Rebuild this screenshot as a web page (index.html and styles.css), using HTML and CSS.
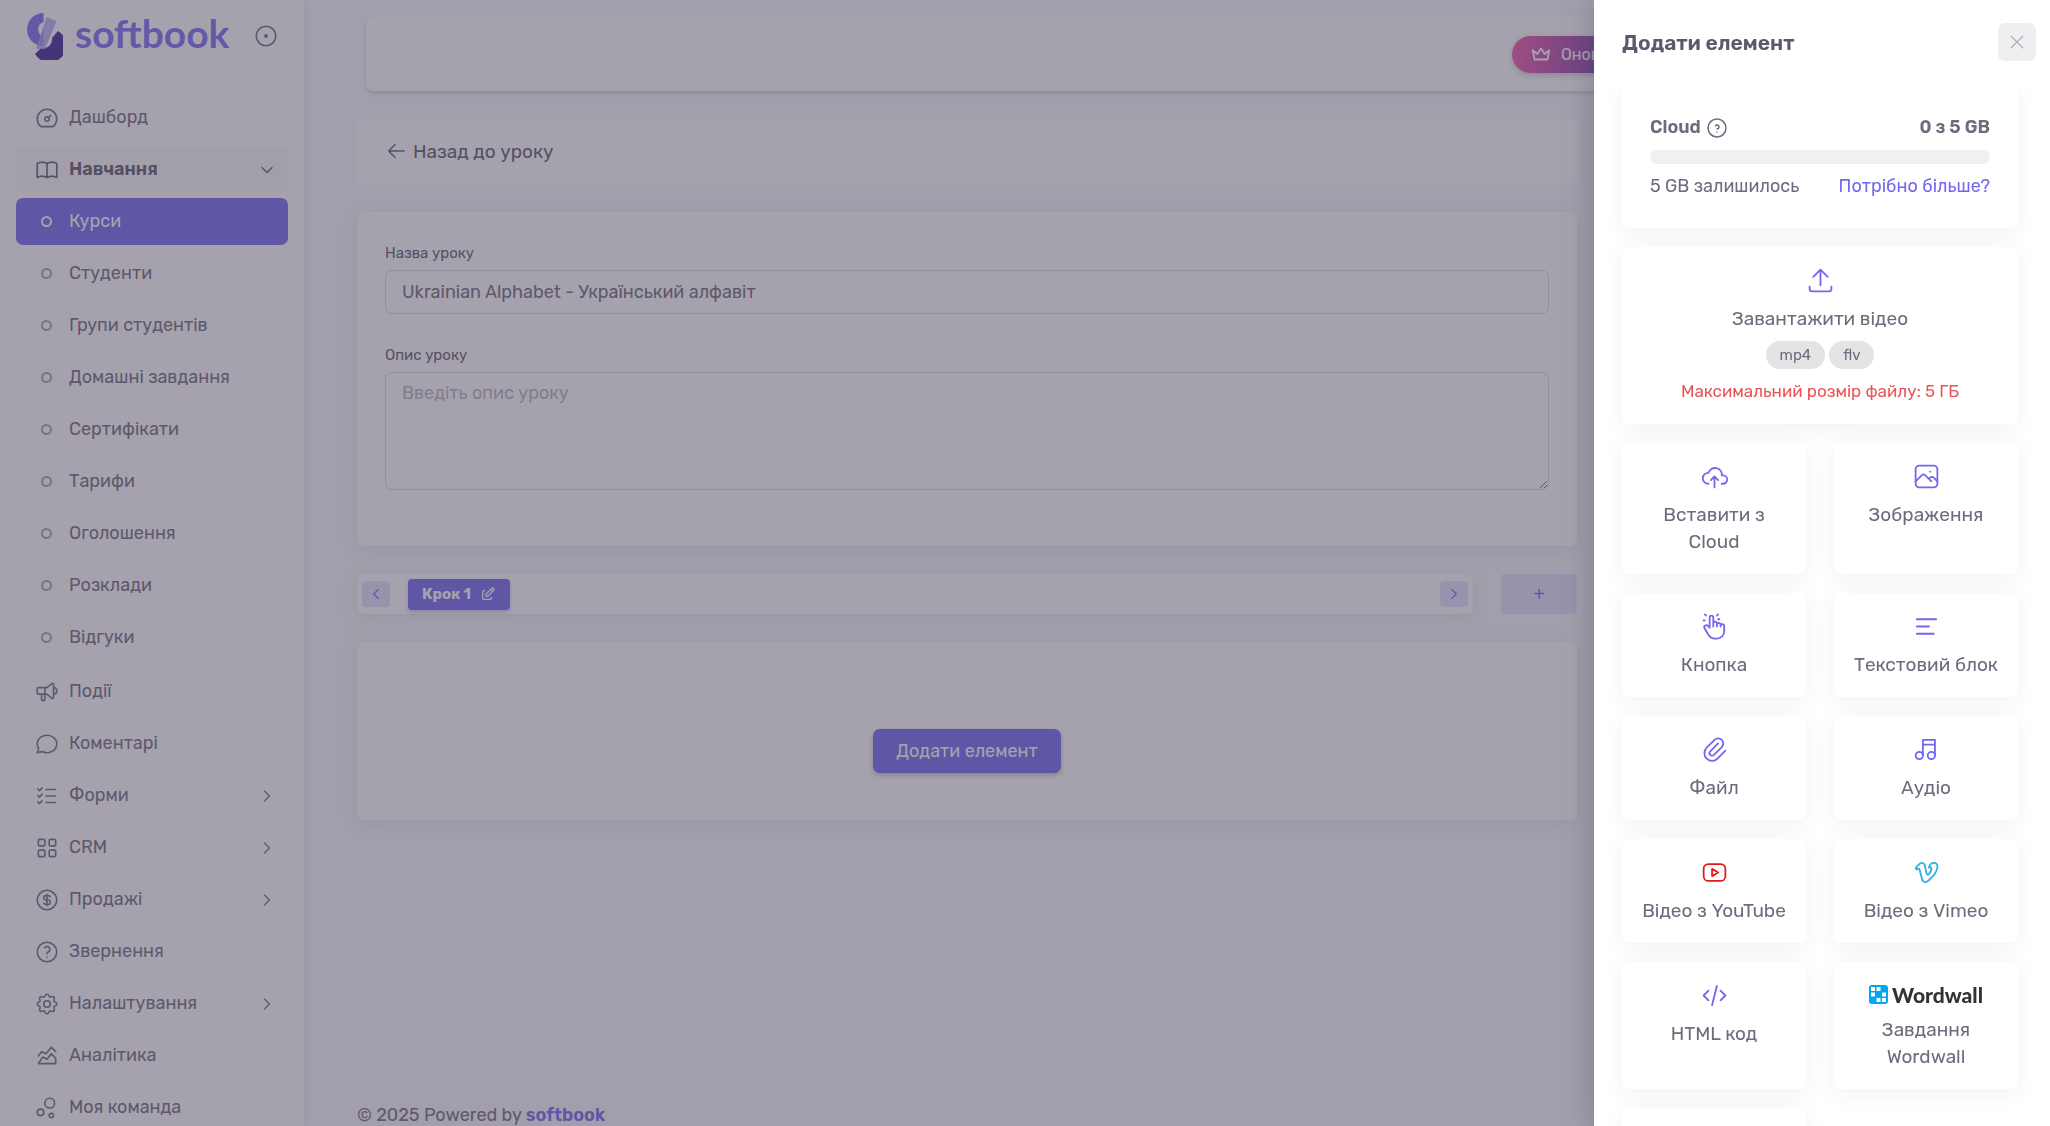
FILE: index.html
```html
<!DOCTYPE html>
<html lang="uk">
<head>
    <meta charset="UTF-8">
    <meta name="viewport" content="width=device-width, initial-scale=1.0">
    <title>softbook - Редагування уроку</title>
    <link rel="stylesheet" href="styles.css">
</head>
<body>
    <div class="layout">
        <aside class="sidebar">
            <div class="brand">
                <a href="#" class="brand-link">
                    <svg class="brand-logo" viewBox="0 0 36 47">
                        <path d="M16.500 0 A16.500 16.500 0 0 0 16.500 33 V24 A8 8 0 0 1 16.500 9 Z" fill="#7c6cf0"/>
                        <path d="M31 18 A16.800 16.800 0 1 1 8 41 L14 35 A9 9 0 0 0 25 25 Z" fill="#3d2494"/>
                        <path d="M16.500 14 V33 L11 33 Z" fill="#7c6cf0"/>
                        <path d="M19.500 4 L29.500 8 L18 36 L9 36 Z" fill="#ab9cf5" opacity="0.8"/>
                    </svg>
                    <span class="brand-text">softbook</span>
                </a>
                <button class="pin-btn" aria-label="Закріпити меню">
                    <svg class="icon" viewBox="0 0 24 24"><circle cx="12" cy="12" r="9"/><circle cx="12" cy="12" r="1" fill="currentColor"/></svg>
                </button>
            </div>

            <nav class="menu">
                <a href="#" class="menu-item">
                    <svg class="icon" viewBox="0 0 24 24"><circle cx="12" cy="13" r="2"/><path d="M13.450 11.550l2.050 -2.050M6.400 20a9 9 0 1 1 11.200 0z"/></svg>
                    <span>Дашборд</span>
                </a>
                <a href="#" class="menu-item open">
                    <svg class="icon" viewBox="0 0 24 24"><path d="M3 19a9 9 0 0 1 9 0a9 9 0 0 1 9 0M3 6a9 9 0 0 1 9 0a9 9 0 0 1 9 0M3 6v13M12 6v13M21 6v13"/></svg>
                    <span>Навчання</span>
                    <svg class="icon arrow" viewBox="0 0 24 24"><path d="M6 9l6 6l6 -6"/></svg>
                </a>
                <div class="submenu">
                    <a href="#" class="menu-item active"><i class="ring"></i><span>Курси</span></a>
                    <a href="#" class="menu-item"><i class="ring"></i><span>Студенти</span></a>
                    <a href="#" class="menu-item"><i class="ring"></i><span>Групи студентів</span></a>
                    <a href="#" class="menu-item"><i class="ring"></i><span>Домашні завдання</span></a>
                    <a href="#" class="menu-item"><i class="ring"></i><span>Сертифікати</span></a>
                    <a href="#" class="menu-item"><i class="ring"></i><span>Тарифи</span></a>
                    <a href="#" class="menu-item"><i class="ring"></i><span>Оголошення</span></a>
                    <a href="#" class="menu-item"><i class="ring"></i><span>Розклади</span></a>
                    <a href="#" class="menu-item"><i class="ring"></i><span>Відгуки</span></a>
                </div>
                <a href="#" class="menu-item">
                    <svg class="icon" viewBox="0 0 24 24"><path d="M18 8a3 3 0 0 1 0 6M10 8v11a1 1 0 0 1 -1 1h-1a1 1 0 0 1 -1 -1v-5M12 8l4.524 -3.770a.9 .9 0 0 1 1.476 .692v12.156a.9 .9 0 0 1 -1.476 .692l-4.524 -3.770h-8a1 1 0 0 1 -1 -1v-4a1 1 0 0 1 1 -1h8"/></svg>
                    <span>Події</span>
                </a>
                <a href="#" class="menu-item">
                    <svg class="icon" viewBox="0 0 24 24"><path d="M3 20l1.300 -3.900a9 8 0 1 1 3.400 2.900l-4.700 1"/></svg>
                    <span>Коментарі</span>
                </a>
                <a href="#" class="menu-item">
                    <svg class="icon" viewBox="0 0 24 24"><path d="M3.500 5.500l1.500 1.500l2.500 -2.500M3.500 11.500l1.500 1.500l2.500 -2.500M3.500 17.500l1.500 1.500l2.500 -2.500M11 6h9M11 12h9M11 18h9"/></svg>
                    <span>Форми</span>
                    <svg class="icon arrow" viewBox="0 0 24 24"><path d="M9 6l6 6l-6 6"/></svg>
                </a>
                <a href="#" class="menu-item">
                    <svg class="icon" viewBox="0 0 24 24"><rect x="4" y="4" width="6" height="6" rx="1"/><rect x="14" y="4" width="6" height="6" rx="1"/><rect x="4" y="14" width="6" height="6" rx="1"/><rect x="14" y="14" width="6" height="6" rx="1"/></svg>
                    <span>CRM</span>
                    <svg class="icon arrow" viewBox="0 0 24 24"><path d="M9 6l6 6l-6 6"/></svg>
                </a>
                <a href="#" class="menu-item">
                    <svg class="icon" viewBox="0 0 24 24"><circle cx="12" cy="12" r="9"/><path d="M14.800 9a2 2 0 0 0 -1.800 -1h-2a2 2 0 1 0 0 4h2a2 2 0 1 1 0 4h-2a2 2 0 0 1 -1.800 -1M12 7v10"/></svg>
                    <span>Продажі</span>
                    <svg class="icon arrow" viewBox="0 0 24 24"><path d="M9 6l6 6l-6 6"/></svg>
                </a>
                <a href="#" class="menu-item">
                    <svg class="icon" viewBox="0 0 24 24"><circle cx="12" cy="12" r="9"/><path d="M12 17v.01M12 13.500a1.500 1.500 0 0 1 1 -1.500a2.600 2.600 0 1 0 -3 -4"/></svg>
                    <span>Звернення</span>
                </a>
                <a href="#" class="menu-item">
                    <svg class="icon" viewBox="0 0 24 24"><path d="M10.325 4.317c.426 -1.756 2.924 -1.756 3.350 0a1.724 1.724 0 0 0 2.573 1.066c1.543 -.94 3.310 .826 2.370 2.370a1.724 1.724 0 0 0 1.065 2.572c1.756 .426 1.756 2.924 0 3.350a1.724 1.724 0 0 0 -1.066 2.573c.94 1.543 -.826 3.310 -2.370 2.370a1.724 1.724 0 0 0 -2.572 1.065c-.426 1.756 -2.924 1.756 -3.350 0a1.724 1.724 0 0 0 -2.573 -1.066c-1.543 .94 -3.310 -.826 -2.370 -2.370a1.724 1.724 0 0 0 -1.065 -2.572c-1.756 -.426 -1.756 -2.924 0 -3.350a1.724 1.724 0 0 0 1.066 -2.573c-.94 -1.543 .826 -3.310 2.370 -2.370c1 .608 2.296 .07 2.572 -1.065z"/><circle cx="12" cy="12" r="3"/></svg>
                    <span>Налаштування</span>
                    <svg class="icon arrow" viewBox="0 0 24 24"><path d="M9 6l6 6l-6 6"/></svg>
                </a>
                <a href="#" class="menu-item">
                    <svg class="icon" viewBox="0 0 24 24"><path d="M4 19l4 -6l4 2l4 -5l4 4v5zM4 12l3 -4l4 2l5 -6l4 4"/></svg>
                    <span>Аналітика</span>
                </a>
                <a href="#" class="menu-item">
                    <svg class="icon" viewBox="0 0 24 24"><circle cx="6" cy="16" r="3"/><circle cx="16" cy="19" r="2"/><circle cx="14.500" cy="7.500" r="4.500"/></svg>
                    <span>Моя команда</span>
                </a>
            </nav>
        </aside>

        <div class="page">
            <header class="navbar">
                <button class="upgrade-btn">
                    <svg class="icon" viewBox="0 0 24 24"><path d="M12 6l4 6l5 -4l-2 10h-14l-2 -10l5 4z"/></svg>
                    <span>Оновити</span>
                </button>
            </header>

            <div class="content">
                <main class="editor">
                    <div class="back-bar">
                        <a href="#" class="back-link">
                            <svg class="icon" viewBox="0 0 24 24"><path d="M4 12h17M4 12l7 7M4 12l7 -7"/></svg>
                            Назад до уроку
                        </a>
                    </div>

                    <form class="card lesson-form">
                        <label for="lessonName">Назва уроку</label>
                        <input type="text" id="lessonName" value="Ukrainian Alphabet - Український алфавіт">
                        <label for="lessonText">Опис уроку</label>
                        <textarea id="lessonText" placeholder="Введіть опис уроку"></textarea>
                    </form>

                    <div class="steps">
                        <div class="steps-bar">
                            <button class="step-nav" aria-label="Попередній крок">
                                <svg class="icon" viewBox="0 0 24 24"><path d="M15 6l-6 6l6 6"/></svg>
                            </button>
                            <button class="step-btn">
                                Крок 1
                                <svg class="icon" viewBox="0 0 24 24"><path d="M7 7h-1a2 2 0 0 0 -2 2v9a2 2 0 0 0 2 2h9a2 2 0 0 0 2 -2v-1M20.385 6.585a2.100 2.100 0 0 0 -2.970 -2.970l-8.415 8.385v3h3l8.385 -8.415zM16 5l3 3"/></svg>
                            </button>
                            <button class="step-nav next" aria-label="Наступний крок">
                                <svg class="icon" viewBox="0 0 24 24"><path d="M9 6l6 6l-6 6"/></svg>
                            </button>
                        </div>
                        <button class="step-add">+</button>
                    </div>

                    <div class="card step-content">
                        <button class="btn-primary">Додати елемент</button>
                    </div>
                </main>
            </div>

            <footer class="footer">© 2025 Powered by <a href="#">softbook</a></footer>
        </div>
    </div>

    <div class="backdrop"></div>

    <aside class="drawer">
        <div class="drawer-header">
            <h2>Додати елемент</h2>
            <button class="close-btn" aria-label="Закрити">
                <svg class="icon" viewBox="0 0 24 24"><path d="M5 5l14 14M19 5l-14 14"/></svg>
            </button>
        </div>

        <div class="drawer-body">
            <section class="tile storage">
                <div class="storage-row total">
                    <span class="storage-title">Cloud
                        <svg class="icon" viewBox="0 0 24 24"><circle cx="12" cy="12" r="9"/><path d="M12 16v.01M12 13a2 2 0 0 0 .9 -3.800a1.980 1.980 0 0 0 -2.400 .5"/></svg>
                    </span>
                    <span>0 з 5 GB</span>
                </div>
                <div class="storage-bar"></div>
                <div class="storage-row">
                    <span>5 GB залишилось</span>
                    <a href="#">Потрібно більше?</a>
                </div>
            </section>

            <button class="tile wide">
                <svg class="icon" viewBox="0 0 24 24"><path d="M3 17v2a2 2 0 0 0 2 2h14a2 2 0 0 0 2 -2v-2M6 9l6 -6l6 6M12 3v13"/></svg>
                <span class="tile-name">Завантажити відео</span>
                <span class="badges"><span class="badge">mp4</span><span class="badge">flv</span></span>
                <span class="limit">Максимальний розмір файлу: 5 ГБ</span>
            </button>

            <button class="tile">
                <svg class="icon" viewBox="0 0 24 24"><path d="M7 18a4.600 4.400 0 0 1 0 -9a5 4.500 0 0 1 11 2h1a3.500 3.500 0 0 1 0 7h-1M9 15l3 -3l3 3M12 12v9"/></svg>
                <span class="tile-name">Вставити з Cloud</span>
            </button>
            <button class="tile">
                <svg class="icon" viewBox="0 0 24 24"><rect x="3" y="3" width="18" height="18" rx="3"/><path d="M15 8h.01M3 16l5 -5c.928 -.893 2.072 -.893 3 0l5 5M14 14l1 -1c.928 -.893 2.072 -.893 3 0l3 3"/></svg>
                <span class="tile-name">Зображення</span>
            </button>
            <button class="tile">
                <svg class="icon" viewBox="0 0 24 24"><path d="M8 13v-8.500a1.500 1.500 0 0 1 3 0v7.500M11 11.500v-2a1.500 1.500 0 0 1 3 0v2.500M14 10.500a1.500 1.500 0 0 1 3 0v1.500M17 11.500a1.500 1.500 0 0 1 3 0v4.500a6 6 0 0 1 -6 6h-2h.208a6 6 0 0 1 -5.012 -2.700l-.196 -.3c-.312 -.479 -1.407 -2.388 -3.286 -5.728a1.500 1.500 0 0 1 .536 -2.022a1.867 1.867 0 0 1 2.280 .28l1.470 1.470M5 3l-1 -1M4 7h-1M14 3l1 -1M15 6h1"/></svg>
                <span class="tile-name">Кнопка</span>
            </button>
            <button class="tile">
                <svg class="icon" viewBox="0 0 24 24"><path d="M4 6h16M4 12h10M4 18h14"/></svg>
                <span class="tile-name">Текстовий блок</span>
            </button>
            <button class="tile">
                <svg class="icon" viewBox="0 0 24 24"><path d="M15 7l-6.500 6.500a1.500 1.500 0 0 0 3 3l6.500 -6.500a3 3 0 0 0 -6 -6l-6.500 6.500a4.500 4.500 0 0 0 9 9l6.500 -6.500"/></svg>
                <span class="tile-name">Файл</span>
            </button>
            <button class="tile">
                <svg class="icon" viewBox="0 0 24 24"><circle cx="6" cy="17" r="3"/><circle cx="16" cy="17" r="3"/><path d="M9 17v-13h10v13M9 8h10"/></svg>
                <span class="tile-name">Аудіо</span>
            </button>
            <button class="tile">
                <svg class="icon youtube" viewBox="0 0 24 24"><rect x="3" y="5" width="18" height="14" rx="4"/><path d="M10 9l5 3l-5 3z"/></svg>
                <span class="tile-name">Відео з YouTube</span>
            </button>
            <button class="tile">
                <svg class="icon vimeo" viewBox="0 0 24 24"><path d="M3 8.500l1 1s1.500 -1.102 2 -.5c.509 .609 1.863 7.650 2.500 9c.556 1.184 1.978 2.890 4 1.500c2 -1.500 7.500 -5.500 8.500 -11.500c.444 -2.661 -1 -4 -2.500 -4c-2 0 -4.047 1.202 -4.500 4c2.050 -1.254 2.551 1 1.500 3c-1.052 2.005 -2 3 -2.500 3c-.49 0 -.924 -1.165 -1.500 -3.500c-.59 -2.420 -.5 -6.500 -3 -6.500s-5.500 4.500 -5.500 4.500z"/></svg>
                <span class="tile-name">Відео з Vimeo</span>
            </button>
            <button class="tile">
                <svg class="icon" viewBox="0 0 24 24"><path d="M7 8l-4 4l4 4M17 8l4 4l-4 4M14 4l-4 16"/></svg>
                <span class="tile-name">HTML код</span>
            </button>
            <button class="tile">
                <span class="wordwall">
                    <svg viewBox="0 0 19 19">
                        <rect width="19" height="19" rx="3" fill="#00a8f3"/>
                        <path d="M2 2h4v4h-4zM7.500 2h4v4h-4zM2 7.500h4v4h-4zM13 7.500h4v4h-4zM7.500 13h4v4h-4zM13 13h4v4h-4z" fill="#fff"/>
                    </svg>
                    Wordwall
                </span>
                <span class="tile-name">Завдання Wordwall</span>
            </button>
            <button class="tile">
                <svg class="icon" viewBox="0 0 24 24"><rect x="4" y="4" width="16" height="16" rx="2"/></svg>
            </button>
        </div>
    </aside>
</body>
</html>
```
FILE: styles.css
```css
* {
    margin: 0;
    padding: 0;
    box-sizing: border-box;
}

:root {
    --primary: #7367f0;
    --primary-soft: #e3e1fc;
    --text: #6f6b7d;
    --heading: #5d596c;
    --border: #dbdade;
    --bg: #f8f7fa;
    --shadow: 0 4px 18px rgba(75, 70, 92, 0.1);
}

body {
    height: 100vh;
    overflow: hidden;
    font-family: Rubik, Roboto, sans-serif;
    font-size: 18px;
    line-height: 27px;
    color: var(--text);
    background-color: var(--bg);
}

button,
input,
textarea {
    font: inherit;
    color: inherit;
}

button {
    border: none;
    background: none;
    cursor: pointer;
}

a {
    color: var(--primary);
    text-decoration: none;
}

.icon {
    flex: none;
    width: 26px;
    height: 26px;
    fill: none;
    stroke: currentColor;
    stroke-width: 1.5;
    stroke-linecap: round;
    stroke-linejoin: round;
}

.layout {
    display: flex;
    height: 100vh;
}

/* Sidebar */
.sidebar {
    flex: none;
    width: 304px;
    overflow: hidden;
    background-color: white;
    box-shadow: 0 2px 9px rgba(75, 70, 92, 0.1);
}

.brand {
    display: flex;
    align-items: center;
    justify-content: space-between;
    height: 72px;
    padding: 0 25px 0 27px;
}

.brand-link {
    display: flex;
    align-items: center;
    gap: 12px;
}

.brand-logo {
    width: 36px;
    height: 47px;
}

.brand-text {
    padding-bottom: 6px;
    font-family: Lato, sans-serif;
    font-size: 39px;
    font-weight: bold;
    line-height: 40px;
    color: #7c6cf0;
}

.pin-btn {
    display: flex;
}

.menu {
    display: flex;
    flex-direction: column;
    gap: 5px;
    padding: 22px 16px;
}

.submenu {
    display: flex;
    flex-direction: column;
    gap: 5px;
    margin-bottom: 2px;
}

.menu-item {
    display: flex;
    flex: none;
    align-items: center;
    gap: 9px;
    height: 47px;
    padding: 0 11px 0 18px;
    border-radius: 7px;
    color: var(--text);
}

.menu-item.open {
    font-weight: 600;
    color: var(--heading);
    background-color: #f8f8f8;
}

.menu-item.active {
    color: white;
    background-color: var(--primary);
}

.menu-item .arrow {
    width: 20px;
    height: 20px;
    margin-left: auto;
}

.ring {
    width: 11px;
    height: 11px;
    margin: 0 8px 0 7px;
    border: 2px solid #a5a2ad;
    border-radius: 50%;
}

.active .ring {
    border-color: white;
}

/* Page */
.page {
    display: flex;
    flex: 1;
    flex-direction: column;
    padding: 17px 57px 0 53px;
}

.navbar {
    display: flex;
    flex: none;
    align-items: center;
    justify-content: flex-end;
    height: 74px;
    margin-left: 9px;
    padding-right: 300px;
    border-radius: 7px;
    background-color: white;
    box-shadow: 0 3px 5px -1px rgba(75, 70, 92, 0.25);
}

.upgrade-btn {
    display: flex;
    align-items: center;
    gap: 9px;
    width: 181px;
    height: 37px;
    padding: 0 18px;
    border-radius: 19px;
    font-size: 16px;
    color: white;
    background: linear-gradient(100deg, #f556a8, #733bae 55%);
    box-shadow: 0 2px 6px rgba(75, 70, 92, 0.3);
}

.upgrade-btn .icon {
    width: 22px;
    height: 22px;
    stroke-width: 2;
}

.content {
    display: grid;
    grid-template-columns: 3fr 1fr;
    margin-right: -28px;
    padding-top: 28px;
}

.editor {
    min-width: 0;
    padding-right: 28px;
}

.card {
    border-radius: 7px;
    background-color: white;
    box-shadow: var(--shadow);
}

.back-bar {
    display: flex;
    align-items: center;
    height: 64px;
    margin-bottom: 29px;
    padding: 0 28px;
    background-color: white;
}

.back-link {
    display: flex;
    align-items: center;
    gap: 6px;
    font-size: 19px;
    color: var(--heading);
}

.back-link .icon {
    width: 22px;
    height: 22px;
}

.lesson-form {
    margin-bottom: 28px;
    padding: 28px;
    height: 334px;
}

.lesson-form label {
    display: block;
    margin-bottom: 3px;
    font-size: 15px;
    color: var(--heading);
}

.lesson-form input,
.lesson-form textarea {
    display: block;
    width: 100%;
    padding: 7px 16px;
    border: 1px solid var(--border);
    border-radius: 7px;
    background: none;
}

.lesson-form input {
    height: 44px;
    margin-bottom: 28px;
}

.lesson-form textarea {
    height: 118px;
    resize: vertical;
}

.lesson-form textarea::placeholder {
    color: #b7b5be;
}

.steps {
    display: flex;
    gap: 28px;
    margin-bottom: 28px;
}

.steps-bar {
    display: flex;
    flex: 1;
    align-items: center;
    height: 40px;
    padding: 0 5px;
    border-radius: 7px;
    background-color: white;
    box-shadow: var(--shadow);
}

.step-nav {
    display: flex;
    align-items: center;
    justify-content: center;
    width: 28px;
    height: 26px;
    border-radius: 4px;
    color: var(--primary);
    background-color: var(--primary-soft);
}

.step-nav.next {
    margin-left: auto;
}

.step-nav .icon {
    width: 18px;
    height: 18px;
}

.step-btn {
    display: flex;
    align-items: center;
    gap: 9px;
    height: 31px;
    margin-left: 18px;
    padding: 0 14px;
    border-radius: 4px;
    font-size: 15px;
    font-weight: bold;
    color: white;
    background-color: var(--primary);
    box-shadow: 0 2px 4px rgba(115, 103, 240, 0.4);
}

.step-btn .icon {
    width: 16px;
    height: 16px;
    stroke-width: 2;
}

.step-add {
    width: 76px;
    border-radius: 4px;
    color: var(--primary);
    background-color: var(--primary-soft);
}

.step-content {
    display: flex;
    align-items: center;
    justify-content: center;
    height: 178px;
    padding-top: 40px;
}

.btn-primary {
    height: 44px;
    padding: 0 23px;
    border-radius: 7px;
    color: white;
    background-color: var(--primary);
    box-shadow: 0 2px 5px rgba(75, 70, 92, 0.4);
}

.footer {
    margin-top: auto;
    margin-bottom: -3px;
}

.footer a {
    font-weight: 600;
}

/* Drawer */
.backdrop {
    position: fixed;
    inset: 0;
    background-color: rgba(75, 70, 92, 0.5);
}

.drawer {
    position: fixed;
    top: 0;
    right: 0;
    bottom: 0;
    display: flex;
    flex-direction: column;
    width: 456px;
    background-color: white;
    box-shadow: 0 4px 28px rgba(75, 70, 92, 0.4);
}

.drawer-header {
    display: flex;
    flex: none;
    align-items: center;
    justify-content: space-between;
    height: 86px;
    padding: 0 14px 2px 28px;
}

.drawer-header h2 {
    font-size: 21px;
    font-weight: 600;
    color: var(--heading);
}

.close-btn {
    display: flex;
    align-items: center;
    justify-content: center;
    width: 38px;
    height: 38px;
    border-radius: 7px;
    color: #a8a6ae;
    background-color: #efeff1;
}

.close-btn .icon {
    width: 20px;
    height: 20px;
}

.drawer-body {
    display: grid;
    flex: 1;
    grid-template-columns: 1fr 1fr;
    gap: 19px 28px;
    align-content: start;
    min-height: 0;
    padding: 0 32px 28px 28px;
    overflow: hidden;
}

.tile {
    display: flex;
    flex-direction: column;
    align-items: center;
    padding: 19px;
    border-radius: 7px;
    background-color: white;
    box-shadow: 0 4px 24px rgba(0, 0, 0, 0.06);
}

.tile > .icon {
    width: 29px;
    height: 29px;
    margin-bottom: 10px;
    color: var(--primary);
}

.tile > .youtube {
    color: #e01b1b;
}

.tile > .vimeo {
    color: #2fb0e0;
}

.tile-name {
    font-size: 19px;
}

.tile.wide,
.tile.storage {
    grid-column: 1 / -1;
}

.tile.storage {
    align-items: stretch;
    height: 142px;
    padding: 28px;
}

.storage-row {
    display: flex;
    justify-content: space-between;
}

.storage-row.total {
    font-weight: 600;
}

.storage-title {
    display: flex;
    align-items: center;
    gap: 4px;
}

.storage-title .icon {
    width: 24px;
    height: 24px;
}

.storage-bar {
    height: 14px;
    margin: 9px 0;
    border-radius: 7px;
    background-color: #f0f0f2;
}

.badges {
    display: flex;
    gap: 4px;
    margin: 9px 0;
}

.badge {
    padding: 0 14px;
    border-radius: 14px;
    font-size: 15px;
    line-height: 28px;
    background-color: #e4e4e4;
}

.limit {
    font-size: 17px;
    color: #ea5455;
}

.wordwall {
    display: flex;
    align-items: center;
    gap: 4px;
    height: 26px;
    margin-bottom: 9px;
    font-family: Lato, sans-serif;
    font-size: 21px;
    font-weight: 900;
    color: #333;
}

.wordwall svg {
    width: 19px;
    height: 19px;
}
```
